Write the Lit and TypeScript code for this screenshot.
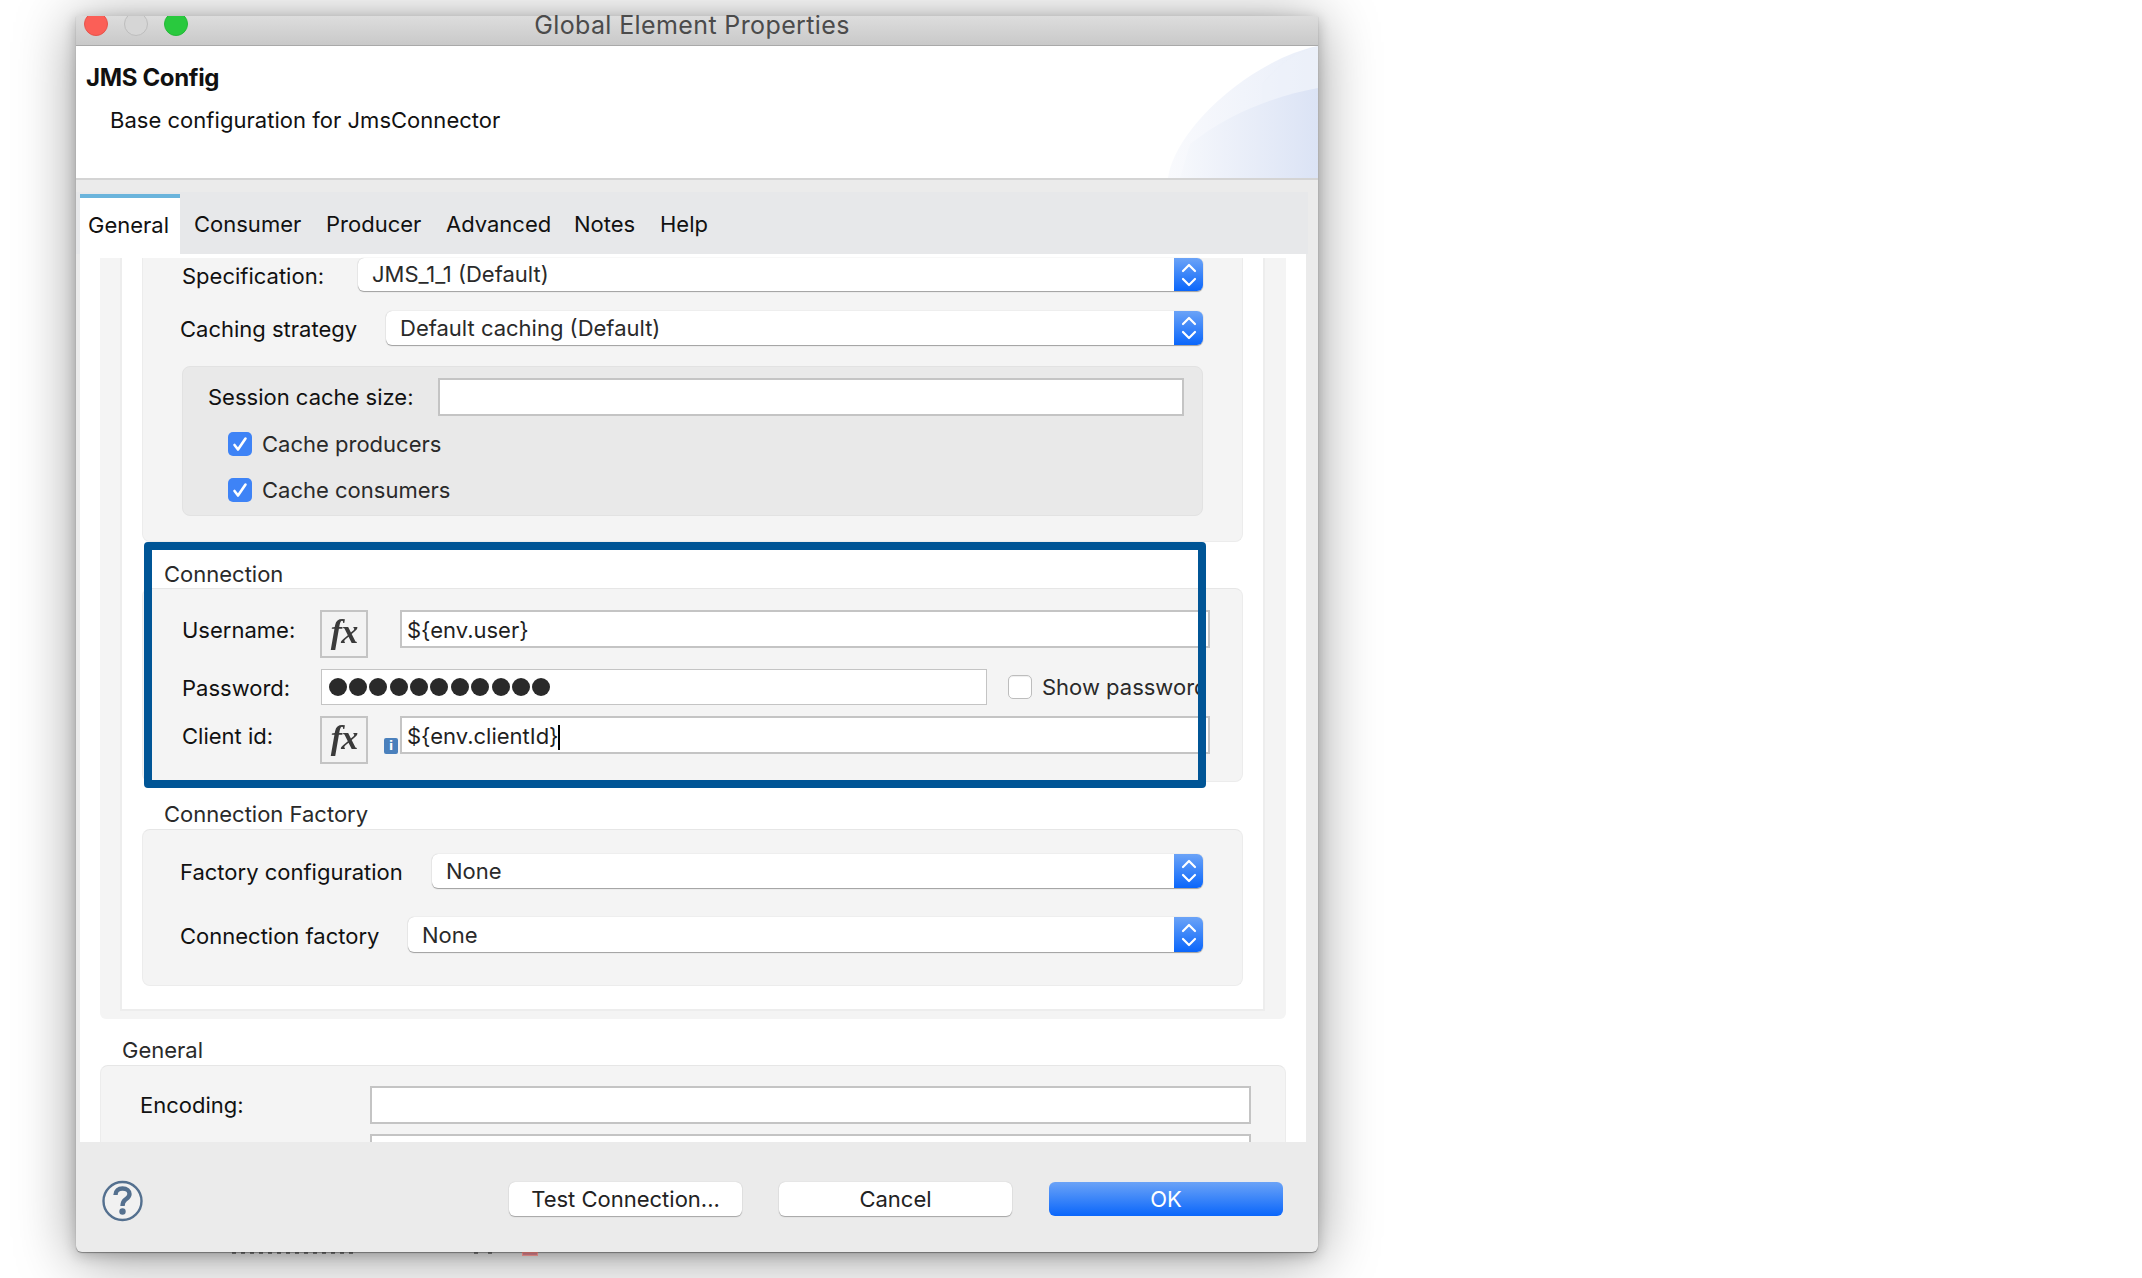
import { LitElement, html, css } from "lit";
import { customElement } from "lit/decorators.js";

@customElement("app-root")
export class AppRoot extends LitElement {
  static styles = css`
    :host { display: block; position: relative; width: 2142px; height: 1278px; overflow: hidden; background: #fff;
      font-family: Inter, "Liberation Sans", sans-serif; font-size: 22px; color: #1f1f1f; }
    .stage { padding: 16px 0 0 76px; }
    .window { width: 1242px; height: 1236px; background: #ebebeb; border-radius: 0 0 6px 6px;
      box-shadow: 0 6px 60px rgba(0,0,0,.4), 0 3px 14px rgba(0,0,0,.22), 0 1px 1px rgba(0,0,0,.35); display: flex; flex-direction: column; position: relative; }
    .titlebar { height: 29px; flex: none; border-bottom: 1px solid #a9a9a9; background: linear-gradient(#dddddd, #c9c9c9);
      position: relative; display: flex; justify-content: center; align-items: flex-start; }
    .lights { position: absolute; left: 8px; top: 0; height: 20px; overflow: hidden; }
    .lightrow { display: flex; gap: 16px; margin-top: -4px; }
    .light { width: 24px; height: 24px; border-radius: 50%; box-sizing: border-box; }
    .red { background: #fb5f57; border: 1px solid #e5544c; }
    .grey { background: #d6d6d6; border: 1px solid #bdbdbd; }
    .green { background: #29c93e; border: 1px solid #24b838; }
    .title { font-size: 25px; color: #4b4b4b; line-height: 26px; letter-spacing: .38px; margin-right: 10px; margin-top: -4px; }
    .header { height: 132px; flex: none; background: #fff; position: relative; border-bottom: 2px solid #d4d4d4; overflow: hidden; }
    .art { position: absolute; right: 0; top: 0; display: block; }
    .h1 { font-weight: 700; font-size: 24px; line-height: 28px; color: #111; padding: 18px 0 0 10px; letter-spacing: -.35px; }
    .h2 { line-height: 28px; padding: 14px 0 0 34px; color: #111; letter-spacing: .03px; }
    .tabwrap { flex: none; height: 62px; margin-top: 12px; margin-right: 10px; background: #e7e8ea; display: flex; }
    .tab { line-height: 26px; padding: 19px 0 0 0; color: #111; }
    .tab.first { margin-left: 4px; margin-right: 14px; width: 100px; box-sizing: border-box; padding: 14px 0 0 8px; height: 62px; margin-top: 2px;
      background: #fff; border-top: 4px solid #6ab4dc; }
    .tab.first span { display: block; }
    .body { flex: none; width: 1186px; height: 880px; margin-left: 4px; background: #fff; padding: 4px 20px; overflow: hidden; }
    .outer { background: #f4f4f4; padding: 0 22px 8px 21px; border-radius: 0 0 6px 6px; }
    .inner { background: #fff; padding: 0 21px 23px; border: 2px solid #ededed; border-top: 0; margin: 0 -1px; }
    .group { background: #f4f4f4; border-radius: 0 0 8px 8px; box-sizing: border-box; border: 1px solid #ececec; border-top: 0; }
    .groupa { height: 284px; margin: 0 -1px; }
    .gtitle { line-height: 24px; color: #2a2a2a; box-sizing: border-box; }
    .round { border-top: 1px solid #e6e6e6; border-radius: 8px; }
    .row { display: flex; align-items: center; }
    .sel { flex: 1; height: 33px; background: #fff; border-radius: 6px; position: relative; line-height: 33px; padding-left: 14px;
      box-shadow: 0 1px 1px #9e9e9e, 0 0 1px #b5b5b5; color: #2a2a2a; }
    .sel.t { height: 34px; line-height: 35px; }
    .sel.u { height: 35px; line-height: 36px; }
    .chev { position: absolute; right: 0; top: 0; bottom: 0; width: 29px; border-radius: 0 6px 6px 0;
      background: linear-gradient(#6ba3f7, #0a66fb); display: flex; align-items: center; justify-content: center; }
    .input { box-sizing: border-box; border: 2px solid #c4c4c4; background: #fff; }
    .box { margin: 21px 39px 0 39px; height: 150px; background: #e9e9e9; border-radius: 8px; border: 1px solid #e2e2e2; box-sizing: border-box; }
    .cb { width: 24px; height: 24px; border-radius: 5px; background: #3e83f6; flex: none; display: flex; align-items: center; justify-content: center; }
    .cb.off { background: #fff; border: 1px solid #bdbdbd; box-sizing: border-box; box-shadow: inset 0 1px 1px #eee; margin-left: 21px; }
    .cbrow { margin-left: 45px; height: 24px; gap: 10px; color: #2a2a2a; }
    .fx { width: 48px; height: 48px; box-sizing: border-box; border: 2px solid #c4c4c4; background: #f3f3f3; flex: none; display: flex; align-items: center; justify-content: center;
      font-family: "Liberation Serif", serif; font-style: italic; font-weight: 700; font-size: 34px; color: #3a3a3a; letter-spacing: -1px; padding-bottom: 4px; }
    .fx span { filter: blur(.5px); }
    .val { height: 38px; line-height: 36px; padding-left: 5px; width: 810px; flex: none; box-sizing: border-box; color: #1f1f1f; }
    .lab { color: #111; flex: none; }
    .pw { width: 666px; height: 36px; border-width: 1.5px; padding-left: 6.5px; display: flex; align-items: center; flex: none; }
    .dots { display: flex; gap: 2.4px; }
    .dot { width: 18px; height: 18px; border-radius: 50%; background: #2a2a2a; }
    .caret { display: inline-block; width: 2px; height: 25px; background: #000; vertical-align: -6px; margin-left: -1px; }
    .info { width: 14px; height: 16px; border-radius: 2px; background: #4a80bc; color: #fff; font-family: "DejaVu Sans", sans-serif; font-weight: 700; font-size: 12px; line-height: 16px; text-align: center; margin: 22px 2px 0 16px; flex: none; }
    .clip { width: 163px; overflow: hidden; white-space: nowrap; margin-left: 10px; flex: none; color: #2a2a2a; }
    .footer { flex: 1; position: relative; }
    .help { position: absolute; left: 26px; top: 38px; display: block; }
    .btn { position: absolute; top: 40px; width: 233px; height: 34px; border-radius: 6px; background: #fff; text-align: center; line-height: 35px;
      box-shadow: 0 1px 1px #a5a5a5, 0 0 1px #b5b5b5; color: #222; }
    .btn.t { left: 433px; }
    .btn.c { left: 703px; }
    .btn.o { left: 973px; width: 234px; color: #fff; box-shadow: none; background: linear-gradient(#6ba3f7, #0a66fb); }
    .frame { position: absolute; left: 144px; top: 542px; width: 1062px; height: 246px; box-sizing: border-box; border: 8px solid #005596; border-radius: 4px; pointer-events: none; }
    .bit { position: absolute; top: 1252px; height: 2px; background: #222; opacity: .55; }
    .bit.txt { left: 232px; width: 124px; background: repeating-linear-gradient(90deg, #1c1c1c 0 4px, transparent 4px 9px); }
    .bit.red { left: 522px; width: 14px; background: #a92b3d; }
    .bit.a { left: 474px; width: 4px; }
    .bit.b { left: 488px; width: 4px; }
  `;

  chev() {
    return html`<svg width="18" height="26" viewBox="0 0 18 26" fill="none" stroke="#fff" stroke-width="2.2" stroke-linecap="round" stroke-linejoin="round"><path d="M3 9 9 3l6 6M3 17l6 6 6-6"/></svg>`;
  }
  check() {
    return html`<svg width="18" height="18" viewBox="0 0 18 18" fill="none" stroke="#fff" stroke-width="2.6" stroke-linecap="round" stroke-linejoin="round"><path d="M3.5 10l3.5 4.5L14.5 3.5"/></svg>`;
  }

  render() {
    return html`
      <div class="stage">
        <div class="window">
          <div class="titlebar">
            <div class="lights"><div class="lightrow"><div class="light red"></div><div class="light grey"></div><div class="light green"></div></div></div>
            <div class="title">Global Element Properties</div>
          </div>
          <div class="header">
            <svg class="art" width="150" height="132" viewBox="0 0 150 132">
              <defs>
                <linearGradient id="a" x1="0" x2="1" y1="0" y2="0"><stop offset="0" stop-color="#f9fafd"/><stop offset="1" stop-color="#e9eef9"/></linearGradient>
                <linearGradient id="b" x1="0" x2="1" y1="0" y2="0"><stop offset="0" stop-color="#f6f8fc"/><stop offset="1" stop-color="#dbe3f5"/></linearGradient>
              </defs>
              <path d="M0 132C6 84 82 14 150 0V132Z" fill="url(#a)"/>
              <path d="M94 38C112 18 124 8 150 0V132H94Z" fill="#eef2fa" opacity=".5"/>
              <path d="M22 98C60 68 106 50 150 42V132H12Z" fill="url(#b)"/>
            </svg>
            <div class="h1">JMS Config</div>
            <div class="h2">Base configuration for JmsConnector</div>
          </div>
          <div class="tabwrap">
            <div class="tab first"><span>General</span></div>
            <div class="tab" style="width:132px">Consumer</div>
            <div class="tab" style="width:120px">Producer</div>
            <div class="tab" style="width:128px">Advanced</div>
            <div class="tab" style="width:86px">Notes</div>
            <div class="tab">Help</div>
          </div>
          <div class="body">
            <div class="outer">
              <div class="inner">
                <div class="group groupa">
                  <div class="row" style="padding:0 39px 0 39px">
                    <div class="lab" style="width:176px;padding-top:3px">Specification:</div>
                    <div class="sel">JMS_1_1 (Default)<div class="chev">${this.chev()}</div></div>
                  </div>
                  <div class="row" style="padding:20px 39px 0 37px">
                    <div class="lab" style="width:206px;padding-top:1px">Caching strategy</div>
                    <div class="sel t">Default caching (Default)<div class="chev">${this.chev()}</div></div>
                  </div>
                  <div class="box">
                    <div class="row" style="padding:11px 18px 0 25px">
                      <div class="lab" style="width:230px">Session cache size:</div>
                      <div class="input" style="flex:1;height:38px"></div>
                    </div>
                    <div class="row cbrow" style="margin-top:16px"><div class="cb">${this.check()}</div>Cache producers</div>
                    <div class="row cbrow" style="margin-top:22px"><div class="cb">${this.check()}</div>Cache consumers</div>
                  </div>
                </div>
                <div class="gtitle" style="height:46px;padding:20px 0 0 21px">Connection</div>
                <div class="group round" style="height:194px;padding:21px 0 0 39px;margin:0 -1px">
                  <div class="row" style="align-items:flex-start">
                    <div class="lab" style="width:138px;padding-top:7px">Username:</div>
                    <div class="fx"><span>fx</span></div>
                    <div class="input val" style="margin-left:32px">\${env.user}</div>
                  </div>
                  <div class="row" style="margin-top:11px">
                    <div class="lab" style="width:139px;padding-top:1px">Password:</div>
                    <div class="input pw">
                      <div class="dots">${Array.from({ length: 11 }, () => html`<div class="dot"></div>`)}</div>
                    </div>
                    <div class="cb off"></div>
                    <div class="clip">Show password</div>
                  </div>
                  <div class="row" style="margin-top:11px;align-items:flex-start">
                    <div class="lab" style="width:138px;padding-top:7px">Client id:</div>
                    <div class="fx"><span>fx</span></div>
                    <div class="info">i</div>
                    <div class="input val">\${env.clientId}<span class="caret"></span></div>
                  </div>
                </div>
                <div class="gtitle" style="height:47px;padding:20px 0 0 21px">Connection Factory</div>
                <div class="group round" style="height:157px;padding-top:24px;margin:0 -1px">
                  <div class="row" style="padding:0 39px 0 37px">
                    <div class="lab" style="width:252px;padding-top:1px">Factory configuration</div>
                    <div class="sel t">None<div class="chev">${this.chev()}</div></div>
                  </div>
                  <div class="row" style="padding:29px 39px 0 37px">
                    <div class="lab" style="width:228px;padding-top:3px">Connection factory</div>
                    <div class="sel u">None<div class="chev">${this.chev()}</div></div>
                  </div>
                </div>
              </div>
            </div>
            <div class="gtitle" style="height:46px;padding:19px 0 0 22px">General</div>
            <div class="group round" style="height:120px;padding:20px 34px 0 0">
              <div class="row">
                <div class="lab" style="width:269px;padding-left:39px;box-sizing:border-box">Encoding:</div>
                <div class="input" style="flex:1;height:38px"></div>
              </div>
              <div class="input" style="height:38px;margin:10px 0 0 269px"></div>
            </div>
          </div>
          <div class="footer">
            <svg class="help" width="42" height="42" viewBox="0 0 42 42" fill="none">
              <circle cx="20.5" cy="21" r="19" fill="#f1f1f1" stroke="#54708f" stroke-width="2.4"/>
              <path d="M13.5 15C13.5 10.5 16.5 8.5 20.5 8.5C25 8.5 27.5 11 27.5 14C27.5 17 25.5 18 23.5 19.5C21.5 21 20.5 22 20.5 26" stroke="#54708f" stroke-width="4.4"/>
              <circle cx="20.5" cy="31.5" r="3.2" fill="#54708f"/>
            </svg>
            <div class="btn t">Test Connection...</div>
            <div class="btn c">Cancel</div>
            <div class="btn o">OK</div>
          </div>
        </div>
      </div>
      <div class="bit txt"></div>
      <div class="bit a"></div>
      <div class="bit b"></div>
      <div class="bit red"></div>
      <div class="frame"></div>
    `;
  }
}
